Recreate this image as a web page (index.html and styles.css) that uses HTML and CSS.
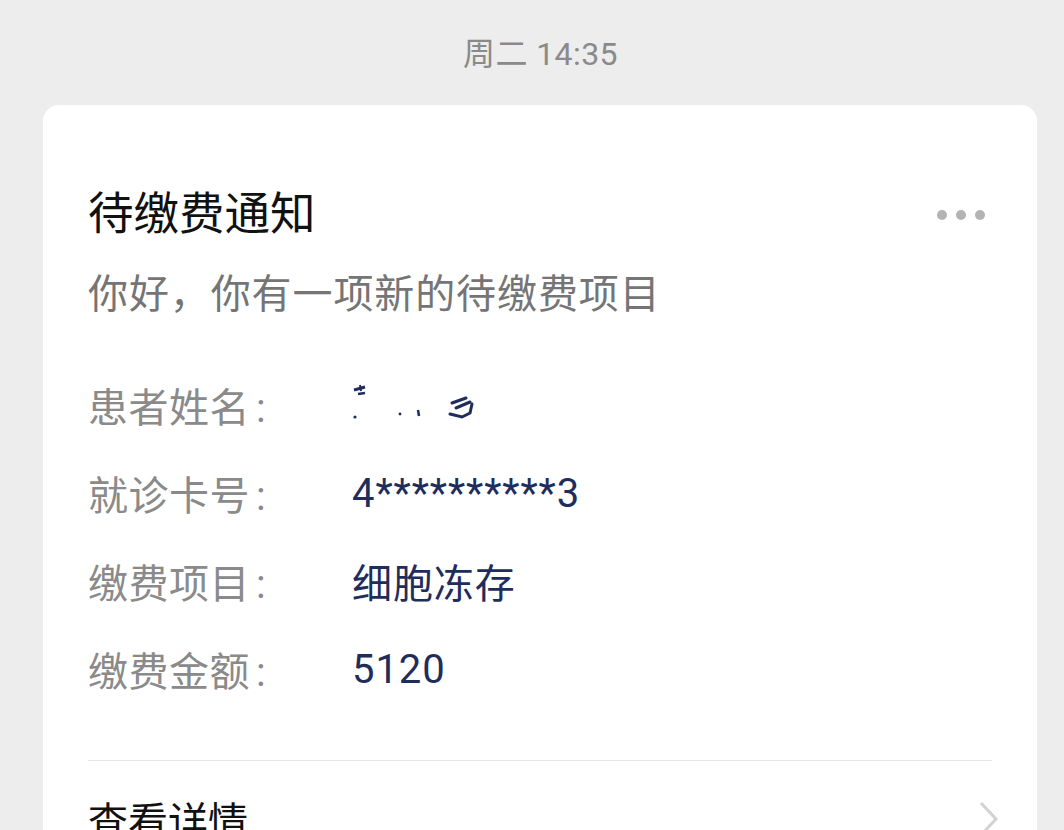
FILE: index.html
```html
<!DOCTYPE html>
<html lang="zh-CN">
<head>
<meta charset="utf-8">
<title>待缴费通知</title>
<link rel="stylesheet" href="styles.css">
</head>
<body>
  <div class="time">周二 14:35</div>
  <div class="card">
    <div class="head">
      <div class="title">待缴费通知</div>
      <div class="more"><span></span><span></span><span></span></div>
    </div>
    <div class="sub">你好，你有一项新的待缴费项目</div>
    <div class="rows">
      <div class="row">
        <div class="label">患者姓名<span class="colon">:</span></div>
        <div class="value">
          <svg class="blur" width="130" height="50" viewBox="0 0 130 50">
            <path d="M2 10 L13 7" stroke="#1f2d5c" stroke-width="3" fill="none"/>
            <path d="M6 14 L13 13" stroke="#1f2d5c" stroke-width="2.5" fill="none"/>
            <path d="M8 5 L9 11" stroke="#1f2d5c" stroke-width="2" fill="none"/>
            <circle cx="3" cy="37" r="1.6" fill="#1f2d5c"/>
            <circle cx="48" cy="34" r="1.4" fill="#1f2d5c"/>
            <path d="M66 30 L67 36" stroke="#1f2d5c" stroke-width="2.5" fill="none"/>
            <path d="M100 23 L114 18 M104 28 L118 22 M98 34 L110 37 L118 33 L120 24" stroke="#1f2d5c" stroke-width="3" fill="none" stroke-linecap="round"/>
          </svg>
        </div>
      </div>
      <div class="row">
        <div class="label">就诊卡号<span class="colon">:</span></div>
        <div class="value">4**********3</div>
      </div>
      <div class="row">
        <div class="label">缴费项目<span class="colon">:</span></div>
        <div class="value">细胞冻存</div>
      </div>
      <div class="row">
        <div class="label">缴费金额<span class="colon">:</span></div>
        <div class="value">5120</div>
      </div>
    </div>
    <div class="footer">
      <div class="link">查看详情</div>
      <svg class="chev" width="22" height="36" viewBox="0 0 22 36">
        <path d="M3 2 L18 18 L3 34" stroke="#d2d2d2" stroke-width="3" fill="none"/>
      </svg>
    </div>
  </div>
</body>
</html>
```
FILE: styles.css
```css
html, body {
  margin: 0;
  padding: 0;
  background: #ededed;
  height: 830px;
  overflow: hidden;
}
body {
  font-family: Roboto, "Noto Sans CJK SC", sans-serif;
  padding-top: 36px;
  box-sizing: border-box;
}
.time {
  text-align: center;
  font-size: 32px;
  line-height: 36px;
  letter-spacing: 0.4px;
  color: #8a8a8a;
  margin-bottom: 33px;
  padding-left: 17px;
}
.card {
  background: #fff;
  margin: 0 27px 0 43px;
  border-radius: 16px;
  padding: 80px 45px 0 45px;
  height: 900px;
}
.head {
  display: flex;
  align-items: center;
  justify-content: space-between;
  height: 60px;
}
.title {
  font-size: 45.5px;
  line-height: 60px;
  color: #111;
}
.more {
  display: flex;
  gap: 9px;
  margin-right: 7px;
}
.more span {
  width: 10px;
  height: 10px;
  border-radius: 50%;
  background: #b3b3b3;
}
.sub {
  margin-top: 22px;
  font-size: 40px;
  line-height: 56px;
  letter-spacing: 0.9px;
  color: #757575;
}
.rows {
  margin-top: 38px;
}
.row {
  display: flex;
  align-items: center;
  height: 88px;
  font-size: 40px;
}
.label {
  width: 264px;
  color: #8a8a8a;
  letter-spacing: 0.5px;
}
.colon {
  margin-left: 6px;
}
.value {
  color: #1f2d5c;
  display: flex;
  align-items: center;
  letter-spacing: 0.9px;
}
.footer {
  margin-top: 47px;
  border-top: 1.5px solid #e6e6e6;
  display: flex;
  align-items: center;
  justify-content: space-between;
  height: 116px;
}
.link {
  font-size: 40px;
  color: #111;
}
.chev {
  margin-right: -8px;
}
```
